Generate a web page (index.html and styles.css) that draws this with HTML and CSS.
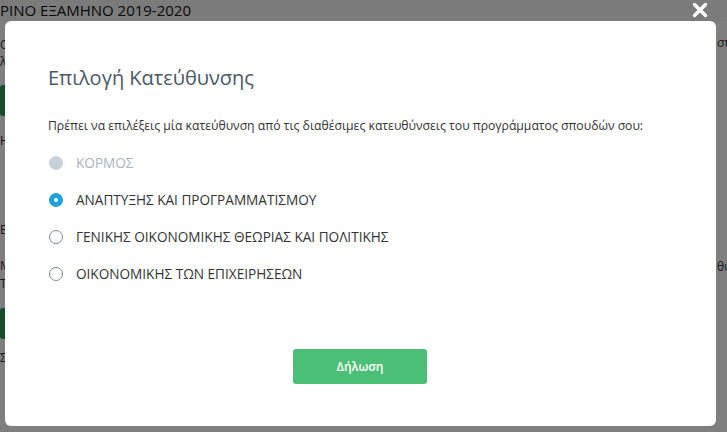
FILE: index.html
```html
<!DOCTYPE html>
<html lang="el">
<head>
    <meta charset="UTF-8">
    <meta name="viewport" content="width=device-width, initial-scale=1.0">
    <title>Επιλογή Κατεύθυνσης</title>
    <link rel="stylesheet" href="styles.css">
</head>
<body>
    <div class="page">
        <div class="page-header">ΡΙΝΟ ΕΞΑΜΗΝΟ 2019-2020</div>
        <div class="page-body">
            <div class="page-col left">
                <p class="frag f1">Οι</p>
                <p class="frag f2">λα</p>
                <div class="frag-btn b1"></div>
                <p class="frag f3">Η</p>
                <p class="frag f4">Ε</p>
                <p class="frag f5">Μ</p>
                <p class="frag f6">Τ</p>
                <div class="frag-btn b2"></div>
                <p class="frag f7">Σ</p>
            </div>
            <div class="page-col right">
                <p class="frag r1">σπ</p>
                <p class="frag r2">θυ</p>
            </div>
        </div>
    </div>

    <div class="overlay">
        <button class="close" aria-label="Κλείσιμο">
            <svg width="16" height="16" viewBox="0 0 16 16">
                <path d="M2.5 2.5 L13.5 13.5 M13.5 2.5 L2.5 13.5" stroke="#fff" stroke-width="3.4" stroke-linecap="round"/>
            </svg>
        </button>

        <div class="modal">
            <h2 class="modal-title">Επιλογή Κατεύθυνσης</h2>
            <p class="modal-text">Πρέπει να επιλέξεις μία κατεύθυνση από τις διαθέσιμες κατευθύνσεις του προγράμματος σπουδών σου:</p>

            <ul class="choices">
                <li class="choice disabled"><span class="radio"></span>ΚΟΡΜΟΣ</li>
                <li class="choice checked"><span class="radio"></span>ΑΝΑΠΤΥΞΗΣ ΚΑΙ ΠΡΟΓΡΑΜΜΑΤΙΣΜΟΥ</li>
                <li class="choice"><span class="radio"></span>ΓΕΝΙΚΗΣ ΟΙΚΟΝΟΜΙΚΗΣ ΘΕΩΡΙΑΣ ΚΑΙ ΠΟΛΙΤΙΚΗΣ</li>
                <li class="choice"><span class="radio"></span>ΟΙΚΟΝΟΜΙΚΗΣ ΤΩΝ ΕΠΙΧΕΙΡΗΣΕΩΝ</li>
            </ul>

            <div class="modal-footer">
                <button class="submit">Δήλωση</button>
            </div>
        </div>
    </div>
</body>
</html>
```

FILE: styles.css
```css
body {
    margin: 0;
    font-family: "Open Sans", "Noto Sans", sans-serif;
    background-color: #fff;
    width: 727px;
    height: 432px;
    overflow: hidden;
}

.page {
    height: 432px;
}

.page-header {
    height: 21px;
    line-height: 21px;
    font-size: 15px;
    color: #111;
    background-color: #f7f7f7;
    white-space: nowrap;
}

.page-body {
    display: flex;
    justify-content: space-between;
    height: 411px;
}

.page-col {
    position: relative;
    width: 10px;
    overflow: hidden;
    font-size: 12px;
    color: #333;
}

.frag {
    position: absolute;
    left: 0;
    margin: 0;
    line-height: 14px;
    white-space: nowrap;
}

.f1 { top: 17px; }
.f2 { top: 34px; }
.f3 { top: 113px; }
.f4 { top: 202px; }
.f5 { top: 238px; }
.f6 { top: 256px; }
.f7 { top: 330px; }
.r1 { top: 15px; }
.r2 { top: 239px; }

.frag-btn {
    position: absolute;
    left: 0;
    width: 10px;
    height: 31px;
    background-color: #2e9a5a;
    border-radius: 3px;
}

.b1 { top: 64px; }
.b2 { top: 287px; }

.overlay {
    position: fixed;
    inset: 0;
    background-color: rgba(0, 0, 0, 0.5);
}

.close {
    position: absolute;
    top: 2px;
    left: 692px;
    padding: 0;
    border: none;
    background: none;
    cursor: pointer;
}

.modal {
    position: absolute;
    top: 21px;
    left: 5px;
    width: 711px;
    height: 405px;
    box-sizing: border-box;
    padding: 43px 44px 0 43px;
    background-color: #fff;
    border-radius: 6px;
    display: flex;
    flex-direction: column;
}

.modal-title {
    margin: 0;
    font-size: 20px;
    font-weight: 400;
    line-height: 28px;
    color: #4a5866;
}

.modal-text {
    margin: 25px 0 0;
    font-size: 12.2px;
    line-height: 18px;
    color: #333;
}

.choices {
    list-style: none;
    margin: 9px 0 0 1px;
    padding: 0;
}

.choice {
    display: flex;
    align-items: center;
    gap: 13px;
    height: 37px;
    font-size: 13.6px;
    color: #333;
}

.choice.disabled {
    color: #a8b5bf;
}

.radio {
    width: 12px;
    height: 12px;
    border: 1px solid #7d8a95;
    border-radius: 50%;
    box-sizing: content-box;
    background-color: #fff;
}

.choice.disabled .radio {
    border-color: #c9d1d8;
    background-color: #c9d1d8;
}

.choice.checked .radio {
    width: 4px;
    height: 4px;
    border: 5px solid #1fa2dc;
}

.modal-footer {
    display: flex;
    justify-content: center;
    margin-top: 57px;
}

.submit {
    width: 134px;
    height: 35px;
    border: none;
    border-radius: 3px;
    background-color: #4cbf76;
    color: #fff;
    font-family: "Open Sans", "Noto Sans", sans-serif;
    font-size: 12px;
    font-weight: 600;
    cursor: pointer;
}
```
